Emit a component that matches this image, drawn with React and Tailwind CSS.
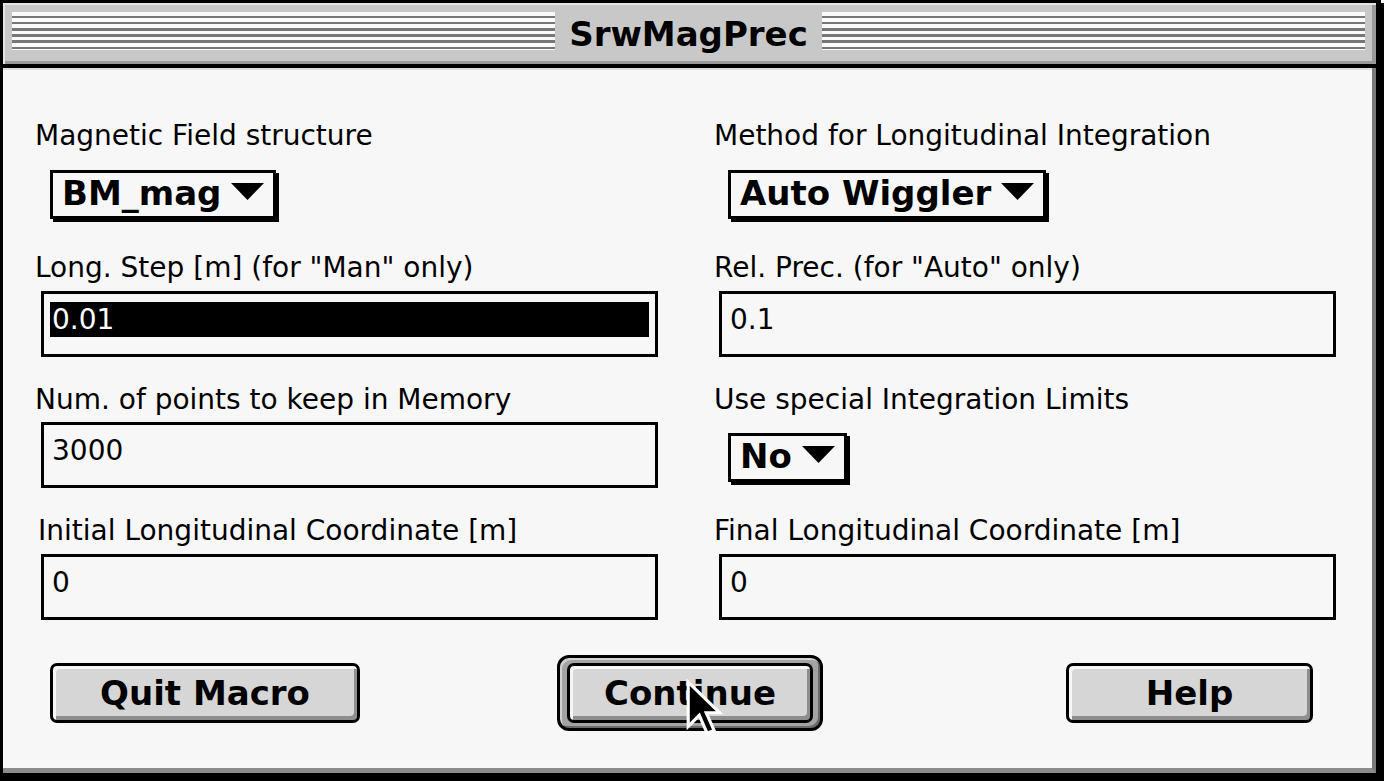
import React from "react";

function Label({ children, className = "pl-[2px]" }) {
  return (
    <div className={`h-[32px] whitespace-nowrap text-[28px] leading-[32px] ${className}`}>
      {children}
    </div>
  );
}

function Popup({ value, className = "" }) {
  return (
    <div
      className={`ml-[17px] flex h-[49px] w-fit items-start border-[3px] border-black bg-[#f7f7f7] pl-[9px] pr-[9px] shadow-[3px_3px_0_0_#000] ${className}`}
    >
      <span className="whitespace-nowrap text-[34px] font-bold leading-[40px]">{value}</span>
      <svg width="33" height="17" viewBox="0 0 33 17" className="ml-[10px] mt-[10px] shrink-0">
        <polygon points="0,0 33,0 16.5,17" fill="#000" />
      </svg>
    </div>
  );
}

function Field({ value, selected = false }) {
  return (
    <div className="ml-[8px] h-[66px] w-[617px] border-[3px] border-black px-[6px] pt-[8px]">
      <div
        className={`h-[35px] pl-[2px] text-[28px] leading-[35px] ${selected ? "bg-black text-white" : ""}`}
      >
        {value}
      </div>
    </div>
  );
}

function Button({ children, className = "" }) {
  return (
    <div
      className={`flex h-[60px] items-center justify-center rounded-[7px] border-[3px] border-black bg-[#d6d6d6] text-[34px] font-bold leading-[40px] shadow-[inset_3px_3px_0_0_#f6f6f6,inset_-3px_-4px_0_0_#8e8e8e] ${className}`}
    >
      {children}
    </div>
  );
}

function Stripes() {
  return (
    <div className="mt-[9px] h-[38px] flex-1 self-start bg-[repeating-linear-gradient(180deg,#fafafa_0px,#fafafa_3.7px,#777777_3.7px,#777777_6.2px)]" />
  );
}

function Cursor() {
  return (
    <svg
      width="38"
      height="60"
      viewBox="0 0 12 19"
      className="absolute left-[685px] top-[679px]"
    >
      <polygon
        points="1,1 1,15 4.5,11.5 7,17.2 9.2,16.3 6.7,10.7 11,10.7"
        fill="#000"
        stroke="#fff"
        strokeWidth="1"
        strokeLinejoin="miter"
      />
    </svg>
  );
}

export default function App() {
  return (
    <div className="relative h-[781px] w-[1384px] overflow-hidden bg-black pl-[3px] pt-[3px] font-['DejaVu_Sans',sans-serif] text-black">
      <div className="absolute right-0 top-0 h-[3px] w-[3px] bg-white" />
      <div className="w-[1373px]">
        {/* title bar */}
        <div className="flex h-[61px] items-center bg-[#c8c8c8] pl-[9px] pr-[11px] shadow-[inset_2px_2px_0_0_#e4e4e4,inset_-4px_-3px_0_0_#9a9a9a]">
          <Stripes />
          <div className="whitespace-nowrap px-[14px] text-[34px] font-bold leading-[40px]">
            SrwMagPrec
          </div>
          <Stripes />
        </div>
        <div className="h-[4px] bg-black" />

        {/* body */}
        <div className="h-[705px] border-b-[5px] border-r-[4px] border-b-[#8c8c8c] border-r-[#7a7a7a] bg-[#f7f7f7] pl-[30px] pt-[52px] shadow-[inset_0_2px_0_0_#dedede]">
          <div className="grid grid-cols-[678px_1fr]">
            <div>
              <Label>Magnetic Field structure</Label>
              <Popup value="BM_mag" className="mt-[18px]" />
            </div>
            <div>
              <Label className="pl-[3px]">Method for Longitudinal Integration</Label>
              <Popup value="Auto Wiggler" className="mt-[18px]" />
            </div>
          </div>

          <div className="mt-[33px] grid grid-cols-[678px_1fr]">
            <div>
              <Label>Long. Step [m] (for "Man" only)</Label>
              <div className="mt-[7px]">
                <Field value="0.01" selected />
              </div>
            </div>
            <div>
              <Label className="pl-[3px]">Rel. Prec. (for "Auto" only)</Label>
              <div className="mt-[7px]">
                <Field value="0.1" />
              </div>
            </div>
          </div>

          <div className="mt-[27px] grid grid-cols-[678px_1fr]">
            <div>
              <Label>Num. of points to keep in Memory</Label>
              <div className="mt-[6px]">
                <Field value="3000" />
              </div>
            </div>
            <div>
              <Label className="pl-[3px]">Use special Integration Limits</Label>
              <Popup value="No" className="mt-[17px] h-[48px]" />
            </div>
          </div>

          <div className="mt-[27px] grid grid-cols-[678px_1fr]">
            <div>
              <Label className="pl-[5px]">Initial Longitudinal Coordinate [m]</Label>
              <div className="mt-[7px]">
                <Field value="0" />
              </div>
            </div>
            <div>
              <Label className="pl-[3px]">Final Longitudinal Coordinate [m]</Label>
              <div className="mt-[7px]">
                <Field value="0" />
              </div>
            </div>
          </div>

          {/* buttons */}
          <div className="mt-[35px] flex items-center">
            <Button className="ml-[17px] w-[310px]">Quit Macro</Button>
            <div className="ml-[197px] rounded-[12px] border-[3px] border-black bg-[#a3a3a3] px-[7px] py-[5px] shadow-[inset_2px_2px_0_0_#d2d2d2,inset_-2px_-2px_0_0_#6a6a6a]">
              <Button className="w-[246px]">Continue</Button>
            </div>
            <Button className="ml-[243px] w-[247px]">Help</Button>
          </div>
        </div>
      </div>
      <Cursor />
    </div>
  );
}
